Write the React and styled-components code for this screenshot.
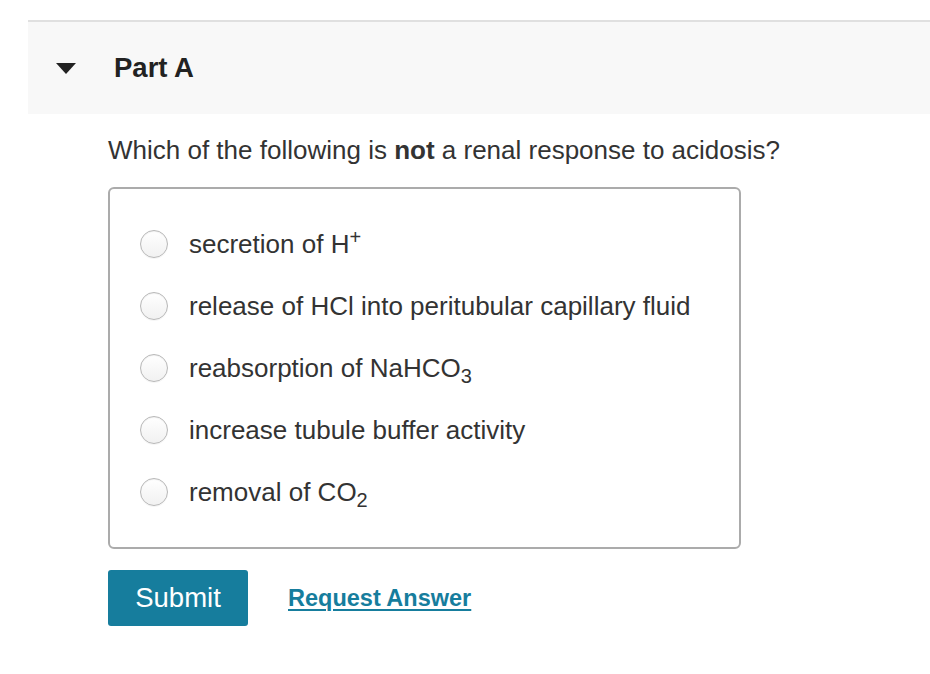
import React from "react";
import styled, { createGlobalStyle } from "styled-components";

const Global = createGlobalStyle`
  html, body { margin: 0; padding: 0; background: #fff; }
  body { font-family: "Liberation Sans", Arial, Helvetica, sans-serif; color: #333; }
`;

const Page = styled.div`
  padding-top: 20px;
  padding-left: 28px;
`;

const Header = styled.div`
  display: flex;
  align-items: center;
  height: 92px;
  border-top: 2px solid #e0e0e0;
  background: #f8f8f8;
`;

const Caret = styled.span`
  width: 0;
  height: 0;
  margin-left: 28px;
  border-left: 10px solid transparent;
  border-right: 10px solid transparent;
  border-top: 11px solid #222;
`;

const Title = styled.h2`
  margin: 0 0 0 38px;
  font-size: 27.5px;
  font-weight: bold;
  color: #222;
`;

const Body = styled.div`
  padding-left: 80px;
`;

const Question = styled.p`
  margin: 20px 0 0 0;
  font-size: 26px;
  line-height: 32px;
  color: #333;
`;

const Box = styled.div`
  margin-top: 21px;
  width: 633px;
  height: 362px;
  border: 2px solid #ababab;
  border-radius: 6px;
  display: flex;
  flex-direction: column;
  padding-top: 24px;
  box-sizing: border-box;
`;

const Option = styled.label`
  display: flex;
  align-items: center;
  height: 62px;
  font-size: 26px;
  color: #333;
`;

const Radio = styled.span`
  width: 28px;
  height: 28px;
  margin-left: 30px;
  margin-right: 21px;
  border-radius: 50%;
  border: 1px solid #b8b8b8;
  box-sizing: border-box;
  background: linear-gradient(#ffffff, #f1f1f1);
  box-shadow: inset 0 1px 1px rgba(0,0,0,0.06), 0 1px 0 rgba(0,0,0,0.04);
  flex: none;
`;

const Sup = styled.sup`
  font-size: 20px;
  vertical-align: 9px;
  line-height: 0;
`;

const Sub = styled.sub`
  font-size: 20px;
  vertical-align: -6px;
  line-height: 0;
`;

const Actions = styled.div`
  display: flex;
  align-items: center;
  margin-top: 21px;
  gap: 40px;
`;

const Submit = styled.button`
  width: 140px;
  height: 56px;
  border: none;
  border-radius: 3px;
  background: #167d9d;
  color: #fff;
  font-family: inherit;
  font-size: 27.5px;
  padding: 0;
`;

const Link = styled.a`
  color: #167d9d;
  font-weight: bold;
  font-size: 23.5px;
  text-decoration: underline;
  text-decoration-thickness: 2px;
  text-underline-offset: 3px;
`;

const options = [
  <>secretion of H<Sup>+</Sup></>,
  <>release of HCl into peritubular capillary fluid</>,
  <>reabsorption of NaHCO<Sub>3</Sub></>,
  <>increase tubule buffer activity</>,
  <>removal of CO<Sub>2</Sub></>,
];

export default function App() {
  return (
    <Page>
      <Global />
      <Header>
        <Caret />
        <Title>Part A</Title>
      </Header>
      <Body>
        <Question>Which of the following is <b>not</b> a renal response to acidosis?</Question>
        <Box>
          {options.map((o, i) => (
            <Option key={i}>
              <Radio />
              <span>{o}</span>
            </Option>
          ))}
        </Box>
        <Actions>
          <Submit>Submit</Submit>
          <Link href="#">Request Answer</Link>
        </Actions>
      </Body>
    </Page>
  );
}
